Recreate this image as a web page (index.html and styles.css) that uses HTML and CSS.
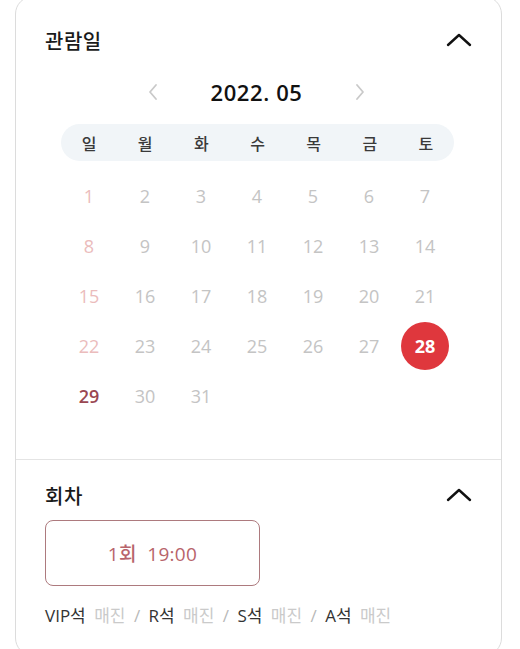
FILE: index.html
```html
<!DOCTYPE html>
<html lang="ko">
<head>
<meta charset="utf-8">
<link rel="stylesheet" href="styles.css">
</head>
<body>
<div class="card">
  <section class="sec sec-date">
    <div class="head">
      <span class="title">관람일</span>
      <svg class="chev" width="26" height="14" viewBox="0 0 26 14"><path d="M2 12 L13 2 L24 12" fill="none" stroke="#111" stroke-width="2.4" stroke-linecap="round" stroke-linejoin="round"/></svg>
    </div>
    <div class="month">
      <svg class="nav" width="10" height="18" viewBox="0 0 10 18"><path d="M8 2 L2 9 L8 16" fill="none" stroke="#c9c9c9" stroke-width="1.8" stroke-linecap="round" stroke-linejoin="round"/></svg>
      <span class="ym">2022. 05</span>
      <svg class="nav" width="10" height="18" viewBox="0 0 10 18"><path d="M2 2 L8 9 L2 16" fill="none" stroke="#c9c9c9" stroke-width="1.8" stroke-linecap="round" stroke-linejoin="round"/></svg>
    </div>
    <div class="week">
      <span>일</span><span>월</span><span>화</span><span>수</span><span>목</span><span>금</span><span>토</span>
    </div>
    <div class="days">
      <span class="sun">1</span><span>2</span><span>3</span><span>4</span><span>5</span><span>6</span><span>7</span>
      <span class="sun">8</span><span>9</span><span>10</span><span>11</span><span>12</span><span>13</span><span>14</span>
      <span class="sun">15</span><span>16</span><span>17</span><span>18</span><span>19</span><span>20</span><span>21</span>
      <span class="sun">22</span><span>23</span><span>24</span><span>25</span><span>26</span><span>27</span><span class="sel"><b>28</b></span>
      <span class="sun act">29</span><span>30</span><span>31</span>
    </div>
  </section>
  <section class="sec sec-time">
    <div class="head">
      <span class="title">회차</span>
      <svg class="chev" width="26" height="14" viewBox="0 0 26 14"><path d="M2 12 L13 2 L24 12" fill="none" stroke="#111" stroke-width="2.4" stroke-linecap="round" stroke-linejoin="round"/></svg>
    </div>
    <button class="slot">1회&nbsp; 19:00</button>
    <p class="seats">VIP석 <span class="so">매진</span> <span class="sl">/</span> R석 <span class="so">매진</span> <span class="sl">/</span> S석 <span class="so">매진</span> <span class="sl">/</span> A석 <span class="so">매진</span></p>
  </section>
</div>
</body>
</html>
```
FILE: styles.css
```css
html, body {
  margin: 0;
  padding: 0;
  background: #fff;
}
body {
  font-family: "Open Sans", "Noto Sans CJK KR", sans-serif;
  color: #222;
  overflow: hidden;
}
.card {
  box-sizing: border-box;
  width: 487px;
  height: 660px;
  margin: -4px 0 0 15px;
  border: 1.5px solid #dcdcdc;
  border-radius: 18px;
  display: flex;
  flex-direction: column;
}
.sec {
  display: flex;
  flex-direction: column;
}
.sec-date {
  padding: 29px 0 38px 0;
  border-bottom: 1.5px solid #e4e4e4;
}
.head {
  height: 28px;
  display: flex;
  align-items: center;
  justify-content: space-between;
  padding: 0 29px 0 29px;
}
.title {
  font-family: "Noto Sans CJK KR", sans-serif;
  font-size: 20px;
  font-weight: 500;
  color: #1a1a1a;
  letter-spacing: 0.5px;
}
.chev {
  display: block;
}
.month {
  margin-top: 24px;
  height: 28px;
  display: flex;
  align-items: center;
  justify-content: center;
  gap: 52px;
  margin-left: -4px;
}
.ym {
  font-size: 22px;
  font-weight: 600;
  color: #111;
  letter-spacing: 0.6px;
}
.nav { display: block; }
.week {
  margin: 18px 0 0 45px;
  width: 393px;
  height: 37px;
  border-radius: 19px;
  background: #f1f5f8;
  display: grid;
  grid-template-columns: repeat(7, 1fr);
  align-items: center;
}
.week span {
  text-align: center;
  font-family: "Noto Sans CJK KR", sans-serif;
  font-size: 16px;
  font-weight: 500;
  color: #3a3a3a;
}
.days {
  margin: 10px 0 0 45px;
  width: 392px;
  display: grid;
  grid-template-columns: repeat(7, 56px);
  grid-auto-rows: 50px;
}
.days span {
  display: flex;
  align-items: center;
  justify-content: center;
  font-size: 18px;
  color: #c4c4c4;
}
.days span.sun { color: #ebbcbc; }
.days span.act { color: #9a4752; font-weight: 600; }
.days span.sel b {
  width: 48px;
  height: 48px;
  border-radius: 50%;
  background: #df373d;
  color: #fff;
  font-weight: 700;
  display: flex;
  align-items: center;
  justify-content: center;
  font-size: 18px;
}
.sec-time {
  padding-top: 21px;
}
.slot {
  margin: 11px 0 0 29px;
  width: 215px;
  height: 66px;
  box-sizing: border-box;
  border: 1.5px solid #ad7a7e;
  border-radius: 8px;
  background: #fff;
  font-family: "Open Sans", "Noto Sans CJK KR", sans-serif;
  font-size: 19px;
  font-weight: 500;
  color: #b8646b;
  padding: 0;
  letter-spacing: 0.3px;
}
.seats {
  margin: 19px 0 0 29px;
  font-size: 17px;
  line-height: 22px;
  color: #333;
  letter-spacing: 0;
  word-spacing: 4px;
}
.seats .so { color: #cacaca; }
.seats .sl { color: #b8b8b8; }
```
